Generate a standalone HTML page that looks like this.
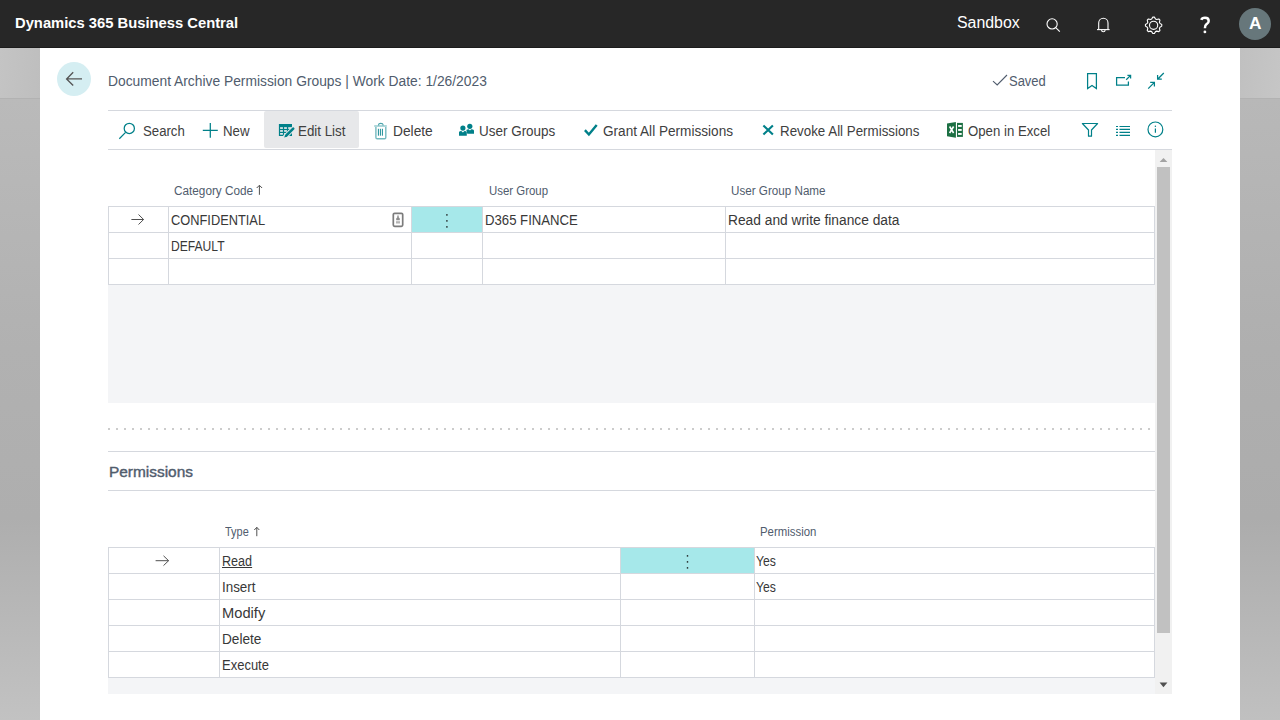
<!DOCTYPE html>
<html><head><meta charset="utf-8">
<style>
*{margin:0;padding:0;box-sizing:border-box}
html,body{width:1280px;height:720px;overflow:hidden;font-family:"Liberation Sans",sans-serif;background:#fff;position:relative}
.a{position:absolute}
.t{position:absolute;line-height:1;white-space:nowrap;transform-origin:0 0}
.hl{position:absolute;height:1px;background:#d5d8de}
.vl{position:absolute;width:1px;background:#d5d8de}
</style></head><body>
<div class="a" style="left:0;top:0;width:1280px;height:47px;background:#272727"></div>
<div class="a" style="left:0;top:47px;width:1280px;height:1px;background:#1c1c1c"></div>
<div class="a" style="left:1239px;top:8px;width:32px;height:32px;border-radius:50%;background:#67777b"></div>

<div class="a" style="left:0;top:98px;width:40px;height:622px;background:linear-gradient(180deg,#bababa 0,#b1b1b1 250px,#aeaeae 420px,#c2c2c2 622px)"></div>
<div class="a" style="left:0;top:48px;width:40px;height:50px;background:linear-gradient(95deg,#c4c4c4,#bebebe)"></div>
<div class="a" style="left:0;top:98px;width:40px;height:1px;background:#b2b2b2"></div>
<div class="a" style="left:1240px;top:98px;width:40px;height:622px;background:linear-gradient(180deg,#b8b8b8 0,#afafaf 250px,#acacac 420px,#c0c0c0 622px)"></div>
<div class="a" style="left:1240px;top:48px;width:40px;height:50px;background:linear-gradient(95deg,#c0c0c0,#c6c6c6)"></div>
<div class="a" style="left:1240px;top:98px;width:40px;height:1px;background:#b2b2b2"></div>

<div class="a" style="left:57px;top:62px;width:34px;height:34px;border-radius:50%;background:#d5eef2"></div>

<!-- toolbar -->
<div class="hl" style="left:108px;top:110px;width:1064px"></div>
<div class="hl" style="left:108px;top:149px;width:1064px"></div>
<div class="a" style="left:264px;top:111px;width:95px;height:37px;background:#e7e8ea;border-radius:2px"></div>

<!-- scrollbar -->
<div class="a" style="left:1155px;top:150px;width:17px;height:544px;background:#f1f1f1"></div>
<div class="a" style="left:1157px;top:167px;width:13px;height:466px;background:#c1c1c1"></div>

<!-- table 1 -->
<div class="a" style="left:108px;top:285px;width:1047px;height:118px;background:#f4f5f7"></div>
<div class="a" style="left:108px;top:206px;width:1047px;height:79px;border:1px solid #d5d8de"></div>
<div class="hl" style="left:108px;top:232px;width:1047px"></div>
<div class="hl" style="left:108px;top:258px;width:1047px"></div>
<div class="vl" style="left:168px;top:206px;height:79px"></div>
<div class="vl" style="left:411px;top:206px;height:79px"></div>
<div class="vl" style="left:482px;top:206px;height:79px"></div>
<div class="vl" style="left:725px;top:206px;height:79px"></div>
<div class="a" style="left:412px;top:207px;width:70px;height:25px;background:#a6e8ea"></div>

<div class="a" style="left:108px;top:428px;width:1047px;height:2px;background:repeating-linear-gradient(90deg,#cccccc 0 2px,transparent 2px 8px)"></div>
<div class="hl" style="left:108px;top:451px;width:1047px"></div>
<div class="hl" style="left:108px;top:490px;width:1047px"></div>

<!-- table 2 -->
<div class="a" style="left:108px;top:678px;width:1047px;height:16px;background:#f4f5f7"></div>
<div class="a" style="left:108px;top:547px;width:1047px;height:131px;border:1px solid #d5d8de"></div>
<div class="hl" style="left:108px;top:573px;width:1047px"></div>
<div class="hl" style="left:108px;top:599px;width:1047px"></div>
<div class="hl" style="left:108px;top:625px;width:1047px"></div>
<div class="hl" style="left:108px;top:651px;width:1047px"></div>
<div class="vl" style="left:219px;top:547px;height:131px"></div>
<div class="vl" style="left:620px;top:547px;height:131px"></div>
<div class="vl" style="left:754px;top:547px;height:131px"></div>
<div class="a" style="left:621px;top:548px;width:133px;height:25px;background:#a6e8ea"></div>

<div id="h1" class="t" style="left:15.20px;top:15.00px;font-size:15px;font-weight:bold;color:#ffffff;transform:scaleX(0.9841);">Dynamics 365 Business Central</div>
<div id="h2" class="t" style="left:957.20px;top:15.46px;font-size:16px;font-weight:normal;color:#ffffff;transform:scaleX(0.9935);">Sandbox</div>
<div id="h3" class="t" style="left:1249.00px;top:15.41px;font-size:17px;font-weight:bold;color:#ffffff;transform:scaleX(1.0167);">A</div>
<div id="ti" class="t" style="left:108.01px;top:74.15px;font-size:14px;font-weight:normal;color:#505c6d;transform:scaleX(0.9869);">Document Archive Permission Groups | Work Date: 1/26/2023</div>
<div id="sv" class="t" style="left:1008.87px;top:74.15px;font-size:14px;font-weight:normal;color:#505c6d;transform:scaleX(0.9263);">Saved</div>
<div id="b1" class="t" style="left:142.83px;top:124.15px;font-size:14px;font-weight:normal;color:#404040;transform:scaleX(0.9419);">Search</div>
<div id="b2" class="t" style="left:223.03px;top:124.15px;font-size:14px;font-weight:normal;color:#404040;transform:scaleX(0.9464);">New</div>
<div id="b3" class="t" style="left:297.82px;top:124.15px;font-size:14px;font-weight:normal;color:#404040;transform:scaleX(0.9531);">Edit List</div>
<div id="b4" class="t" style="left:392.52px;top:124.15px;font-size:14px;font-weight:normal;color:#404040;transform:scaleX(0.9821);">Delete</div>
<div id="b5" class="t" style="left:479.42px;top:124.15px;font-size:14px;font-weight:normal;color:#404040;transform:scaleX(0.9615);">User Groups</div>
<div id="b6" class="t" style="left:602.62px;top:124.15px;font-size:14px;font-weight:normal;color:#404040;transform:scaleX(0.9714);">Grant All Permissions</div>
<div id="b7" class="t" style="left:780.21px;top:124.15px;font-size:14px;font-weight:normal;color:#404040;transform:scaleX(0.9534);">Revoke All Permissions</div>
<div id="b8" class="t" style="left:968.19px;top:124.15px;font-size:14px;font-weight:normal;color:#404040;transform:scaleX(0.9425);">Open in Excel</div>
<div id="c1" class="t" style="left:173.80px;top:184.84px;font-size:12px;font-weight:normal;color:#505c6d;transform:scaleX(0.9800);">Category Code</div>
<div id="c2" class="t" style="left:488.51px;top:184.84px;font-size:12px;font-weight:normal;color:#505c6d;transform:scaleX(0.9516);">User Group</div>
<div id="c3" class="t" style="left:731.21px;top:184.84px;font-size:12px;font-weight:normal;color:#505c6d;transform:scaleX(0.9711);">User Group Name</div>
<div id="r1" class="t" style="left:170.84px;top:213.15px;font-size:14px;font-weight:normal;color:#383838;transform:scaleX(0.9157);">CONFIDENTIAL</div>
<div id="r2" class="t" style="left:171.25px;top:239.15px;font-size:14px;font-weight:normal;color:#383838;transform:scaleX(0.8645);">DEFAULT</div>
<div id="r3" class="t" style="left:484.67px;top:213.15px;font-size:14px;font-weight:normal;color:#383838;transform:scaleX(0.9402);">D365 FINANCE</div>
<div id="r4" class="t" style="left:727.52px;top:213.15px;font-size:14px;font-weight:normal;color:#383838;transform:scaleX(0.9838);">Read and write finance data</div>
<div id="pt" class="t" style="left:108.59px;top:463.90px;font-size:15px;font-weight:normal;color:#505c6d;transform:scaleX(1.0280);-webkit-text-stroke:0.4px;">Permissions</div>
<div id="c4" class="t" style="left:225.37px;top:525.84px;font-size:12px;font-weight:normal;color:#505c6d;transform:scaleX(0.9115);">Type</div>
<div id="c5" class="t" style="left:760.03px;top:525.84px;font-size:12px;font-weight:normal;color:#505c6d;transform:scaleX(0.9492);">Permission</div>
<div id="s1" class="t" style="left:222.05px;top:554.15px;font-size:14px;font-weight:normal;color:#383838;transform:scaleX(0.9000);text-decoration:underline;text-underline-offset:1px;">Read</div>
<div id="s2" class="t" style="left:222.02px;top:580.15px;font-size:14px;font-weight:normal;color:#383838;transform:scaleX(0.9571);">Insert</div>
<div id="s3" class="t" style="left:221.98px;top:606.15px;font-size:14px;font-weight:normal;color:#383838;transform:scaleX(1.0488);">Modify</div>
<div id="s4" class="t" style="left:222.01px;top:632.15px;font-size:14px;font-weight:normal;color:#383838;transform:scaleX(0.9750);">Delete</div>
<div id="s5" class="t" style="left:222.04px;top:658.15px;font-size:14px;font-weight:normal;color:#383838;transform:scaleX(0.9280);">Execute</div>
<div id="y1" class="t" style="left:756.49px;top:554.15px;font-size:14px;font-weight:normal;color:#383838;transform:scaleX(0.8727);">Yes</div>
<div id="y2" class="t" style="left:756.49px;top:580.15px;font-size:14px;font-weight:normal;color:#383838;transform:scaleX(0.8727);">Yes</div>

<svg class="a" style="left:0;top:0" width="1280" height="720" viewBox="0 0 1280 720" fill="none">
 <!-- header icons -->
 <g stroke="#ffffff" stroke-width="1.1">
  <circle cx="1052.1" cy="23.9" r="5.1"/>
  <path d="M1056,27.9 L1059.8,31.7"/>
  <path d="M1098.7,29.6 V22.9 A4.65,4.65 0 0 1 1108,22.9 V29.6"/>
  <path d="M1097,29.6 H1109.6"/>
  <path d="M1101.6,30 A1.75,1.75 0 0 0 1105.1,30"/>
  <path d="M1152.80,17.14 L1154.40,17.14 L1155.52,18.98 L1156.71,19.48 L1158.80,18.96 L1159.94,20.10 L1159.42,22.19 L1159.92,23.38 L1161.76,24.50 L1161.76,26.10 L1159.92,27.22 L1159.42,28.41 L1159.94,30.50 L1158.80,31.64 L1156.71,31.12 L1155.52,31.62 L1154.40,33.46 L1152.80,33.46 L1151.68,31.62 L1150.49,31.12 L1148.40,31.64 L1147.26,30.50 L1147.78,28.41 L1147.28,27.22 L1145.44,26.10 L1145.44,24.50 L1147.28,23.38 L1147.78,22.19 L1147.26,20.10 L1148.40,18.96 L1150.49,19.48 L1151.68,18.98Z" stroke-linejoin="round"/>
  <circle cx="1153.6" cy="25.3" r="4.1"/>
 </g>
 <path d="M1201.3,19.9 Q1201.9,17.8 1205,17.8 Q1208.7,17.8 1208.7,20.9 Q1208.7,22.8 1206.6,24.1 Q1204.9,25.3 1204.9,28.3" stroke="#fff" stroke-width="2.5"/>
 <circle cx="1204.9" cy="31.9" r="1.4" fill="#fff"/>
 <!-- back arrow -->
 <path d="M66.8,78.9 H82 M73.2,72.3 L66.6,78.9 L73.2,85.5" stroke="#555555" stroke-width="1.35"/>
 <!-- saved check -->
 <path d="M993,81.1 L997.2,85 L1007,75" stroke="#505c6d" stroke-width="1.1"/>
 <!-- bookmark, open, collapse -->
 <g stroke="#008089" stroke-width="1.25">
  <path d="M1087.6,88.6 V73.6 H1096.4 V88.6 L1092,85.6 Z" stroke-linejoin="miter"/>
  <path d="M1125,77.6 H1116.6 V85.1 H1128.4 V81.5"/>
  <path d="M1126.2,79.8 L1130.6,75.4 M1127.4,75.4 H1130.6 V78.6"/>
  <path d="M1163.8,73 L1157.6,79.2 M1157.6,75 V79.2 H1161.8"/>
  <path d="M1148.2,88.6 L1154.4,82.4 M1150.2,82.4 H1154.4 V86.6"/>
 </g>
 <!-- toolbar icons -->
 <g stroke="#008089" stroke-width="1.25">
  <circle cx="129.3" cy="128.4" r="5.1"/>
  <path d="M125.6,132.4 L119.3,138.7"/>
  <path d="M210.3,123 V137.8 M202.8,130.4 H217.8"/>
 </g>
 <!-- edit list -->
 <rect x="278.9" y="124" width="13.1" height="12" fill="#008089"/>
 <g fill="#e7e8ea">
  <rect x="280.1" y="127.2" width="2.8" height="1.7"/><rect x="284.1" y="127.2" width="2.8" height="1.7"/><rect x="288.2" y="127.2" width="2.8" height="1.7"/>
  <rect x="280.1" y="130.1" width="2.8" height="1.7"/><rect x="284.1" y="130.1" width="2.8" height="1.7"/><rect x="288.2" y="130.1" width="2.8" height="1.7"/>
  <rect x="280.1" y="133.0" width="2.8" height="1.7"/><rect x="284.1" y="133.0" width="2.8" height="1.7"/><rect x="288.2" y="133.0" width="1.8" height="1.7"/>
 </g>
 <path d="M285.2,136.6 L293.2,128.6" stroke="#e7e8ea" stroke-width="4.6" stroke-linecap="round"/>
 <path d="M286.3,135.5 L293.2,128.6" stroke="#008089" stroke-width="2.6" stroke-linecap="round"/>
 <path d="M284.2,137.6 L285.1,134.9 L286.9,136.7 Z" fill="#008089"/>
 <!-- trash -->
 <g>
  <path d="M375.9,127 V137.6 Q375.9,138.8 377.2,138.8 H384.6 Q385.8,138.8 385.8,137.6 V127" stroke="#74b9bf" stroke-width="1.4"/>
  <path d="M374.2,126 H386.8" stroke="#8cc6cb" stroke-width="1.4"/>
  <path d="M378.6,125.5 V124.6 Q378.6,123.4 380.8,123.4 Q383,123.4 383,124.6 V125.5" stroke="#4aa4ab" stroke-width="1.1"/>
  <path d="M378.4,128.8 V135.7 M380.4,128.8 V135.7 M382.4,128.8 V135.7" stroke="#008089" stroke-width="0.9"/>
 </g>
 <!-- user groups -->
 <g fill="#008089">
  <circle cx="469.8" cy="126.3" r="2.6"/>
  <path d="M466.3,130 Q467,129.2 468.6,129.2 L470,130.6 L471.2,129.2 Q473.6,129.2 474,130.4 V133.8 H467.3 Q466.8,131.5 466.3,130Z"/>
  <circle cx="462.9" cy="128.1" r="2.6"/>
  <path d="M459,132.3 Q459.2,131 461.3,131 L462.9,132.4 L464.5,131 Q466.6,131 466.8,132.3 V135.8 H459Z"/>
 </g>
 <!-- check -->
 <path d="M584.9,130.1 L588.9,134.5 L596.7,124.9" stroke="#008089" stroke-width="2.4"/>
 <!-- X -->
 <path d="M763.4,125.4 L772.9,134.6 M772.9,125.4 L763.4,134.6" stroke="#008089" stroke-width="2.1"/>
 <!-- excel -->
 <g>
  <path d="M947,123.4 L955.9,122 V137.8 L947,136.2 Z" fill="#1d7044"/>
  <path d="M949.6,126.5 L953.6,133 M953.6,126.5 L949.6,133" stroke="#fff" stroke-width="1.6"/>
  <rect x="957" y="122.9" width="5.9" height="14" fill="#1d7044"/>
  <rect x="958.1" y="125" width="3.6" height="1.9" fill="#fff"/>
  <rect x="958.1" y="129" width="3.6" height="1.9" fill="#fff"/>
  <rect x="958.1" y="133" width="3.6" height="1.9" fill="#fff"/>
 </g>
 <!-- filter list info -->
 <g stroke="#008089" stroke-width="1.2">
  <path d="M1082.4,123.5 H1097.6 L1091.5,130 V136.2 H1088.5 V130 Z" stroke-linejoin="round"/>
  <path d="M1116,126.5 h2 M1119.5,126.5 h10.5 M1116,129.4 h2 M1119.5,129.4 h10.5 M1116,132.4 h2 M1119.5,132.4 h10.5 M1116,135.4 h2 M1119.5,135.4 h10.5"/>
  <circle cx="1155.4" cy="129.4" r="7.4"/>
  <path d="M1155.4,128.4 V132.8"/>
 </g>
 <circle cx="1155.4" cy="126.3" r="0.75" fill="#008089"/>
 <!-- sort arrows -->
 <g stroke="#505050" stroke-width="1">
  <path d="M259.4,185.4 V194.8 M256.7,188 L259.4,185.3 L262.1,188"/>
  <path d="M256.8,527.4 V536.2 M254.3,530 L256.8,527.3 L259.3,530"/>
 </g>
 <!-- row arrows -->
 <g stroke="#505050" stroke-width="1">
  <path d="M131.4,219.5 H143.6 M138.5,214.5 L143.6,219.5 L138.5,224.5"/>
  <path d="M155.6,560.7 H168.6 M163.5,555.8 L168.6,560.7 L163.5,565.6"/>
 </g>
 <!-- dots -->
 <g fill="#141414">
  <rect x="446.2" y="214.2" width="1.4" height="1.4"/><rect x="446.2" y="220.2" width="1.4" height="1.4"/><rect x="446.2" y="226.2" width="1.4" height="1.4"/>
  <rect x="686.8" y="555.2" width="1.4" height="1.4"/><rect x="686.8" y="561.2" width="1.4" height="1.4"/><rect x="686.8" y="567.2" width="1.4" height="1.4"/>
 </g>
 <!-- cell icon -->
 <rect x="393.3" y="213.3" width="9.4" height="13" rx="1.3" stroke="#7c7c7c" stroke-width="1.7"/>
 <path d="M397.3,215.6 h1.4 v1.7 l1.1,1.3 v1.6 h-3.6 v-1.6 l1.1,-1.3z" fill="#8c8c8c"/>
 <rect x="396" y="221.2" width="4" height="2.3" fill="#b4b4b4"/>
 <!-- scroll arrows -->
 <path d="M1159.6,162 L1163.5,158 L1167.4,162 Z" fill="#a3a3a3"/>
 <path d="M1159.6,682.6 L1167.4,682.6 L1163.5,687.2 Z" fill="#505050"/>
</svg>
</body></html>
